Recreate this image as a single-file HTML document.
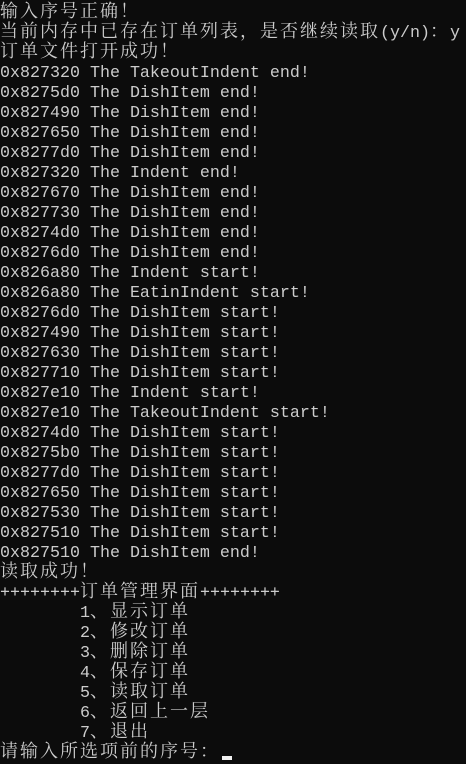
<!DOCTYPE html>
<html><head><meta charset="utf-8"><style>
html,body{margin:0;padding:0;background:#0c0c0c;}
body{width:466px;height:763px;overflow:hidden;position:relative;}
.t{font-family:"Liberation Mono",monospace;font-size:16.67px;color:#cccccc;}
.t div{height:20px;line-height:20px;white-space:pre;}
.c{font-family:"Noto Serif CJK SC","Noto Sans CJK SC",serif;font-size:18px;letter-spacing:2px;}
.l{position:relative;top:4px;}
.cur{position:absolute;left:222px;top:756px;width:10px;height:4px;background:#f0f0f0;}
</style></head><body><div class="t">
<div><span class="c">输入序号正确！</span></div>
<div><span class="c">当前内存中已存在订单列表，是否继续读取</span>(y/n)<span class="c">：</span>y</div>
<div><span class="c">订单文件打开成功！</span></div>
<div class="l">0x827320 The TakeoutIndent end!</div>
<div class="l">0x8275d0 The DishItem end!</div>
<div class="l">0x827490 The DishItem end!</div>
<div class="l">0x827650 The DishItem end!</div>
<div class="l">0x8277d0 The DishItem end!</div>
<div class="l">0x827320 The Indent end!</div>
<div class="l">0x827670 The DishItem end!</div>
<div class="l">0x827730 The DishItem end!</div>
<div class="l">0x8274d0 The DishItem end!</div>
<div class="l">0x8276d0 The DishItem end!</div>
<div class="l">0x826a80 The Indent start!</div>
<div class="l">0x826a80 The EatinIndent start!</div>
<div class="l">0x8276d0 The DishItem start!</div>
<div class="l">0x827490 The DishItem start!</div>
<div class="l">0x827630 The DishItem start!</div>
<div class="l">0x827710 The DishItem start!</div>
<div class="l">0x827e10 The Indent start!</div>
<div class="l">0x827e10 The TakeoutIndent start!</div>
<div class="l">0x8274d0 The DishItem start!</div>
<div class="l">0x8275b0 The DishItem start!</div>
<div class="l">0x8277d0 The DishItem start!</div>
<div class="l">0x827650 The DishItem start!</div>
<div class="l">0x827530 The DishItem start!</div>
<div class="l">0x827510 The DishItem start!</div>
<div class="l">0x827510 The DishItem end!</div>
<div><span class="c">读取成功！</span></div>
<div>++++++++<span class="c">订单管理界面</span>++++++++</div>
<div>        1<span class="c">、显示订单</span></div>
<div>        2<span class="c">、修改订单</span></div>
<div>        3<span class="c">、删除订单</span></div>
<div>        4<span class="c">、保存订单</span></div>
<div>        5<span class="c">、读取订单</span></div>
<div>        6<span class="c">、返回上一层</span></div>
<div>        7<span class="c">、退出</span></div>
<div><span class="c">请输入所选项前的序号：</span></div>
</div><div class="cur"></div></body></html>
